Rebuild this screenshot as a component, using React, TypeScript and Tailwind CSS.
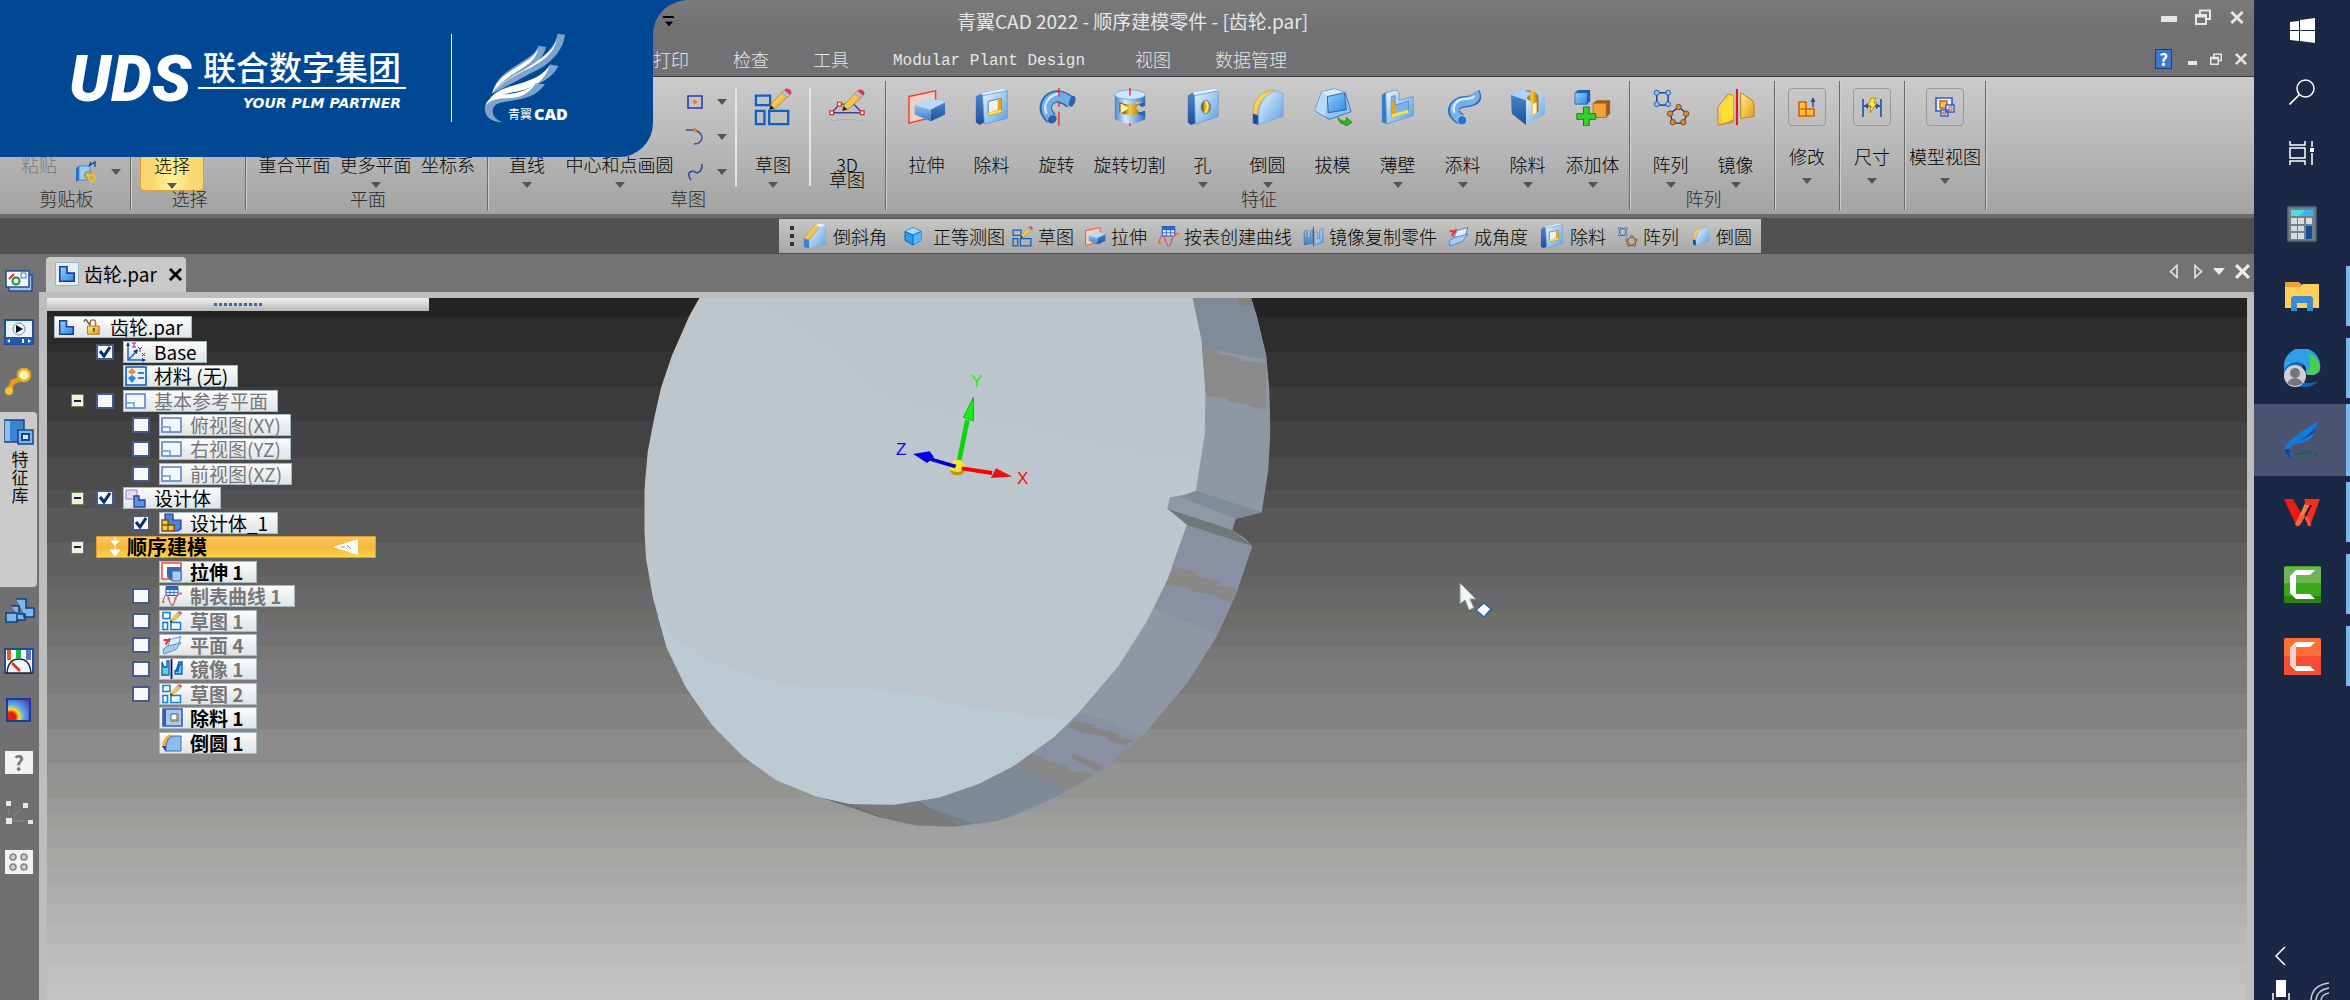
import React from 'react';

type IconProps = { className?: string };
type IconType = (p: IconProps) => React.ReactElement;

const Svg = ({ box = '0 0 40 40', className = '', children }: { box?: string; className?: string; children: React.ReactNode }) => (
  <svg viewBox={box} className={`shrink-0 ${className}`} fill="none" aria-hidden="true">
    {children}
  </svg>
);

/* Gradients shared by all icons */
const Gradients = () => (
  <svg className="absolute h-0 w-0" aria-hidden="true">
    <defs>
      <linearGradient id="blueLight" x1="0" y1="0" x2="1" y2="1">
        <stop offset="0" stopColor="#e8f5ff" />
        <stop offset="1" stopColor="#5a9fe0" />
      </linearGradient>
      <linearGradient id="blueMid" x1="0" y1="0" x2="0" y2="1">
        <stop offset="0" stopColor="#8cc2f0" />
        <stop offset="1" stopColor="#3c7cc4" />
      </linearGradient>
      <linearGradient id="blueDark" x1="0" y1="0" x2="0" y2="1">
        <stop offset="0" stopColor="#4a86cc" />
        <stop offset="1" stopColor="#1d4f98" />
      </linearGradient>
      <linearGradient id="gold" x1="0" y1="0" x2="1" y2="1">
        <stop offset="0" stopColor="#fff08a" />
        <stop offset="1" stopColor="#e59a12" />
      </linearGradient>
      <linearGradient id="goldDark" x1="0" y1="0" x2="1" y2="0">
        <stop offset="0" stopColor="#4a3208" />
        <stop offset="0.5" stopColor="#f6c93a" />
        <stop offset="1" stopColor="#a56a10" />
      </linearGradient>
      <linearGradient id="metal" x1="0" y1="0" x2="1" y2="0">
        <stop offset="0" stopColor="#4585cc" />
        <stop offset="0.35" stopColor="#d6ecfd" />
        <stop offset="1" stopColor="#3573bb" />
      </linearGradient>
      <linearGradient id="sky" x1="0" y1="0" x2="1" y2="1">
        <stop offset="0" stopColor="#8fd4ff" />
        <stop offset="1" stopColor="#2f86d8" />
      </linearGradient>
    </defs>
  </svg>
);

const Pencil = ({ t = '' }: { t?: string }) => (
  <g transform={t}>
    <path d="M16 23l2-6L31 3l6 5L23 21z" fill="url(#gold)" stroke="#a8741a" strokeWidth=".7" />
    <path d="M16 23l1.500-5 4 3.500z" fill="#222" />
    <path d="M29 5l3-3 6 5-3 3z" fill="#b9c0c8" stroke="#777" strokeWidth=".5" />
    <path d="M32 2q3-3 6 0t0 5z" fill="#e33355" />
  </g>
);

const Sketch: IconType = ({ className }) => (
  <Svg className={className}>
    <path d="M2 8h15v10H2zM2 24h9v14H2zM16 24h20v14H16z" stroke="#0c5fc8" strokeWidth="2.400" />
    <Pencil />
  </Svg>
);
const Sketch3D: IconType = ({ className }) => (
  <Svg className={className}>
    <path d="M3 35q17-4 33 0" stroke="#aaa" strokeWidth="1" />
    <path d="M4 26L12 17H27L36 26z" stroke="#3a3f9a" strokeWidth="1.500" />
    <path d="M2 24h4v4H2zM10 15h4v4h-4zM34 24h4v4h-4z" fill="#fff" stroke="#e8201c" strokeWidth="1.300" />
    <Pencil t="translate(-1 1)" />
  </Svg>
);
const Extrude: IconType = ({ className }) => (
  <Svg className={className}>
    <path d="M1 9L29 3V30L1 37z" fill="#f0cfc4" stroke="#ee3e2c" strokeWidth="1.500" />
    <path d="M7 18L21 10l18 5-15 8z" fill="#b8dcf8" />
    <path d="M7 18l17 5v12L7 28z" fill="url(#blueMid)" />
    <path d="M24 23l15-8v13l-15 7z" fill="url(#blueDark)" />
  </Svg>
);
const Cutout: IconType = ({ className }) => (
  <Svg className={className}>
    <path d="M3 9L8 6l4 2v28l-5 3-4-3z" fill="url(#blueDark)" />
    <path d="M8 6L31 1l5 2-24 5z" fill="#dceefc" />
    <path d="M10 8L36 3v29l-24 6z" fill="url(#blueLight)" stroke="#5f97d2" strokeWidth=".8" />
    <path d="M16 14l14-3v14l-14 4z" fill="#f2f2f0" stroke="#4076b8" />
    <path d="M16 26l10-3V12l4-1v15l-14 3z" fill="#e8a81a" />
    <path d="M16 29l14-4v-2l-14 3z" fill="#ffe84a" />
  </Svg>
);
const Revolve: IconType = ({ className }) => (
  <Svg className={className}>
    <path d="M14 32C2 20 11 8 22 9c6 1 9 3 13 7" stroke="#2e68b0" strokeWidth="13" />
    <path d="M14 32C3 20 11 9 22 9c6 1 9 3 13 7" stroke="#6fade8" strokeWidth="10" />
    <path d="M9 27C4 16 13 7 22 6" stroke="#d2e9fb" strokeWidth="2.500" />
    <ellipse cx="36" cy="14" rx="3" ry="6" transform="rotate(20 36 14)" fill="#2b62ab" />
    <ellipse cx="15" cy="33" rx="5" ry="4" transform="rotate(-40 15 33)" fill="#2b62ab" />
    <path d="M22 0v9m0 5v6m0 5v15" stroke="#ee1c1c" strokeWidth="1.300" />
  </Svg>
);
const RevolveCut: IconType = ({ className }) => (
  <Svg className={className}>
    <path d="M4 7v26q16 9 32 0v-7H26V15h10V7z" fill="url(#metal)" />
    <ellipse cx="20" cy="7" rx="16" ry="5" fill="#cbe6fb" stroke="#5e98d4" strokeWidth=".7" />
    <path d="M9 15q10 4 22 1l-5 5 5 6q-12 3-22-1z" fill="url(#goldDark)" />
    <path d="M10 16l9 5-9 6z" fill="#fff3a0" />
    <path d="M29 17l7-3v5l-4 1zM28 26l8-2v6l-6-2z" fill="#2a63ae" />
    <path d="M20 0v8m0 29v3" stroke="#ee1c1c" strokeWidth="1.400" />
  </Svg>
);
const Hole: IconType = ({ className }) => (
  <Svg className={className}>
    <path d="M4 8l5-3 3 3v29l-5 2-3-3z" fill="url(#blueDark)" />
    <path d="M9 5L32 1l4 2-24 5z" fill="#e2f2fd" />
    <path d="M11 8L36 3v27l-24 8z" fill="url(#blueLight)" stroke="#5f97d2" strokeWidth=".8" />
    <ellipse cx="23" cy="20" rx="5" ry="7" fill="url(#goldDark)" stroke="#5c8cc4" />
    <path d="M23 14q5 6-1 12" stroke="#fff0a0" strokeWidth="1.500" />
  </Svg>
);
const Round: IconType = ({ className }) => (
  <Svg className={className}>
    <path d="M4 27C4 12 14 3 25 2l3 2C16 8 10 14 9 28z" fill="url(#gold)" stroke="#c5901c" strokeWidth=".6" />
    <path d="M4 27l6 2v10l-6-2z" fill="#1e5099" />
    <path d="M10 39V28C11 15 18 6 28 3l8 3v24z" fill="url(#blueLight)" stroke="#6ea2d8" strokeWidth=".6" />
  </Svg>
);
const Chamfer: IconType = ({ className }) => (
  <Svg className={className}>
    <path d="M3 24L20 3l8 2L12 26z" fill="url(#gold)" stroke="#b8861c" strokeWidth=".7" />
    <path d="M3 24l8 3v12l-8-2z" fill="#3d80cc" />
    <path d="M11 39V27L28 5l8-2 1 30z" fill="url(#blueLight)" stroke="#6ea2d8" strokeWidth=".6" />
    <path d="M20 3l8-2 9 2-9 3z" fill="#e6f4ff" />
  </Svg>
);
const Draft: IconType = ({ className }) => (
  <Svg className={className}>
    <path d="M8 4L22 1l11 4 6 20-23 8L1 24z" fill="#8fc3f0" stroke="#2f66ab" strokeWidth=".9" />
    <path d="M8 4L22 1l11 4-19 4z" fill="#d5ecfd" />
    <path d="M8 4L1 24l11 6 2-21z" fill="#b9dbf7" />
    <path d="M14 9l18-4 2 18-19 3z" fill="url(#sky)" stroke="#2b63a8" strokeWidth="1" />
    <path d="M25 31q6 6 9 3v-3l6 5-7 5v-3q-6 1-8-7z" fill="#28b81c" stroke="#127010" strokeWidth=".7" />
  </Svg>
);
const Shell: IconType = ({ className }) => (
  <Svg className={className}>
    <path d="M3 7l5-3v34l-5-2z" fill="#3b7cc4" />
    <path d="M7 5l11-3 3 2v9l15-4v20L8 38z" fill="url(#blueLight)" stroke="#5a93d0" strokeWidth=".8" />
    <path d="M13 9l4-1v10l14-4v11l-18 6z" fill="#7fb2e4" stroke="#3c78bc" strokeWidth=".7" />
    <path d="M17 18v10l-4 3V9z" fill="#e8a51c" />
    <path d="M13 28l18-5v3l-18 5z" fill="#ffe23c" />
  </Svg>
);
const Sweep: IconType = ({ className }) => (
  <Svg className={className}>
    <path d="M32 5c5 9-6 9-13 10S4 25 18 33" stroke="#2d68b2" strokeWidth="12" />
    <path d="M32 5c4 8-6 9-13 10S5 25 18 33" stroke="#74b1ea" strokeWidth="9.500" />
    <path d="M31 8c1 4-8 3-13 4S8 20 11 26" stroke="#d9eefd" strokeWidth="2.500" />
    <ellipse cx="19" cy="34" rx="5" ry="5" fill="#2f72bf" stroke="#b5dbf8" />
  </Svg>
);
const SweepCut: IconType = ({ className }) => (
  <Svg className={className}>
    <path d="M2 7l16 6v26L3 27z" fill="url(#blueDark)" />
    <path d="M2 7L14 1l24 5-20 7z" fill="#a9d2f5" />
    <path d="M18 13l20-7v21L18 39z" fill="url(#blueLight)" />
    <path d="M17 3q9 2 4 5t3 7v14l7-4V9Q29 3 22 2z" fill="url(#goldDark)" />
    <path d="M25 17l4-2v11l-4 2z" fill="#fdf5d0" />
  </Svg>
);
const AddBody: IconType = ({ className }) => (
  <Svg className={className}>
    <path d="M1 5l3-3h13v12l-3 3H1z" fill="#1b60b4" />
    <path d="M1 5h13v12H1z" fill="url(#sky)" stroke="#1b5aa8" strokeWidth=".7" />
    <path d="M20 16l4-3h14v14l-4 4H20z" fill="#a4581a" />
    <path d="M20 16h14v15H20z" fill="#f2a33c" stroke="#a95f14" strokeWidth=".7" />
    <path d="M10 20h6v7h7v6h-7v7h-6v-7H3v-6h7z" fill="#35d02a" stroke="#137a12" strokeWidth="1" />
  </Svg>
);
const Pattern: IconType = ({ className }) => (
  <Svg className={className}>
    <path d="M5 5h12v13H5z" stroke="#23408f" strokeWidth="1.600" />
    <g fill="#8ec4f5" stroke="#1f58b0">
      <circle cx="5" cy="5" r="2.600" /><circle cx="17" cy="5" r="2.600" /><circle cx="5" cy="17" r="2.600" /><circle cx="17" cy="17" r="2.600" />
    </g>
    <path d="M28 20l9 7-4 10H22l-3-10z" stroke="#23308f" strokeWidth="1.500" />
    <g fill="#d98a3c" stroke="#7c4412">
      <circle cx="28" cy="20" r="2.800" /><circle cx="36" cy="27" r="2.800" /><circle cx="33" cy="36" r="2.800" /><circle cx="22" cy="36" r="2.800" /><circle cx="19" cy="27" r="2.800" />
    </g>
  </Svg>
);
const Mirror: IconType = ({ className }) => (
  <Svg className={className}>
    <path d="M1 20L12 6l5 2v28L1 39z" fill="url(#gold)" stroke="#b98410" />
    <path d="M5 21L14 9l3-1v25L5 37z" fill="#ffe032" />
    <path d="M25 5l12 8 2 4v13l-14 2z" fill="url(#gold)" stroke="#b98410" />
    <path d="M21 1v38" stroke="#ee1212" strokeWidth="2.200" />
  </Svg>
);
const Cube: IconType = ({ className }) => (
  <Svg className={className}>
    <path d="M4 11L20 3l16 8v18l-16 9L4 29z" fill="#2f9bea" stroke="#0f62b8" strokeWidth="2" />
    <path d="M4 11l16 7 16-7-16-8z" fill="#9edcff" />
    <path d="M20 18v20l16-9V11z" fill="#55b8f8" />
    <path d="M4 11l16 7 16-7M20 18v20" stroke="#0f62b8" strokeWidth="2" />
  </Svg>
);
const TableCurve: IconType = ({ className }) => (
  <Svg className={className}>
    <path d="M8 1h24v18H8z" fill="#dcecff" stroke="#2358b8" strokeWidth="2" />
    <path d="M8 2h24v6H8z" fill="#2767d0" />
    <path d="M8 13h24M16 8v11M24 8v11" stroke="#2358b8" strokeWidth="1.500" />
    <path d="M2 33C5 14 11 14 14 27s9 14 12 2S34 14 38 14" stroke="#b860a8" strokeWidth="2.500" />
    <path d="M0 32h5M11 26h5M18 38h5M35 15h5M24 25h5" stroke="#f07818" strokeWidth="4" />
  </Svg>
);
const MirrorPart: IconType = ({ className }) => (
  <Svg className={className}>
    <path d="M2 10l6-2v16l6-3V9l4-2v26L2 36z" fill="url(#blueMid)" stroke="#2a63ad" />
    <path d="M38 5l-6 2v16l-5 2V11l-4 1v24l15-5z" fill="url(#blueLight)" stroke="#2a63ad" />
    <path d="M20 1v38" stroke="#ee1c1c" strokeWidth="2" />
  </Svg>
);
const AnglePlane: IconType = ({ className }) => (
  <Svg className={className}>
    <path d="M2 29l12-9 24-5-10 14-24 9z" fill="#a5cdf2" stroke="#3a78c4" strokeWidth="1.500" />
    <path d="M12 22L16 9l22-6-5 14z" fill="#dcecfb" stroke="#3a78c4" strokeWidth="1.500" />
    <path d="M3 8h9l4-3v9l-3-1-4 8-3-3 3-6H3z" fill="#ee3030" />
  </Svg>
);

/* ---------- tree icons ---------- */
const PartIcon: IconType = ({ className }) => (
  <Svg box="0 0 20 20" className={className}>
    <path d="M2 2h8v7h8v9H2z" fill="url(#sky)" stroke="#1c3c9c" strokeWidth="1.800" />
  </Svg>
);
const LockIcon: IconType = ({ className }) => (
  <Svg box="0 0 20 20" className={className}>
    <path d="M1 4q2-4 4 0t3 2" stroke="#7a4a3a" strokeWidth="1.600" />
    <path d="M8 9V5a3 3 0 016 0v4" stroke="#9a6a3a" strokeWidth="1.500" />
    <path d="M5 9h13v9H5z" fill="url(#gold)" stroke="#a86c18" />
    <path d="M11 11h2v4h-2z" fill="#6b3e10" />
  </Svg>
);
const BaseIcon: IconType = ({ className }) => (
  <Svg box="0 0 20 20" className={className}>
    <path d="M2 1v17h17M2 18L11 9" stroke="#1e66c0" strokeWidth="1.500" />
    <path d="M0 4l2-4 2 4zM16 16l4 2-4 2zM7 9l5-2-1 5z" fill="#123c9c" />
    <path d="M6 1h4M8 1v4M6 5h4M12 5l2 2 2-2M14 7v3M16 11l3 3M19 11l-3 3" stroke="#8c1c9c" />
  </Svg>
);
const MaterialIcon: IconType = ({ className }) => (
  <Svg box="0 0 22 20" className={className}>
    <path d="M1 1h20v18H1z" fill="#e4f2ff" stroke="#0e56c0" strokeWidth="1.600" />
    <path d="M7 2l4 4-4 3-4-3z" fill="#f0902c" />
    <path d="M7 9l4 3-4 5-4-5z" fill="#2c88e0" />
    <path d="M13 7h6M13 12h6" stroke="#1c50a8" strokeWidth="1.600" />
  </Svg>
);
const PlaneIcon: IconType = ({ className }) => (
  <Svg box="0 0 22 20" className={className}>
    <path d="M1 3h19v14H1z" fill="#f2f8ff" stroke="#5c7cc4" strokeWidth="1.500" />
    <path d="M2 12h7v5" stroke="#5c9ce4" strokeWidth="1.400" />
  </Svg>
);
const BodyIcon: IconType = ({ className }) => (
  <Svg box="0 0 22 20" className={className}>
    <path d="M1 2h11v9H1z" fill="#e4dcf4" stroke="#8c84b8" />
    <path d="M9 8h5v4h6v7H9z" fill="#5c94e0" stroke="#2448a0" strokeWidth="1.400" />
  </Svg>
);
const Body1Icon: IconType = ({ className }) => (
  <Svg box="0 0 22 20" className={className}>
    <path d="M4 1h8v6h8v9l-3 2H9L4 8z" fill="#4a84d8" stroke="#1c3c90" strokeWidth="1.200" />
    <path d="M1 7h6v5h6v6H1zM1 12h6v6" fill="#f8cc3c" stroke="#7c4c0c" strokeWidth="1.300" />
  </Svg>
);
const ExtrudeNode: IconType = ({ className }) => (
  <Svg box="0 0 22 20" className={className}>
    <path d="M1 1h19v16H1z" fill="#fff" stroke="#ee4a40" strokeWidth="1.500" />
    <path d="M6 5h14v14h-9l-5-4z" fill="#3c68b8" />
    <path d="M11 9h9v10h-9z" fill="#a4ccf4" stroke="#3c68b8" />
  </Svg>
);
const SketchNode: IconType = ({ className }) => (
  <Svg box="0 0 40 40" className={className}>
    <path d="M2 3h14v12H2zM2 23h9v14H2zM18 23h19v14H18z" fill="#fff" stroke="#0c80d8" strokeWidth="3" />
    <Pencil />
  </Svg>
);
const MirrorNode: IconType = ({ className }) => (
  <Svg box="0 0 22 20" className={className}>
    <path d="M1 3l2 5h3V2h2v14H1zM21 3l-3 4-1 5h-2l3-9h3v12h-7v-4" fill="#5cd4dc" stroke="#1c58b0" strokeWidth="1.300" />
    <path d="M10.500 0v20" stroke="#0c1470" strokeWidth="1.800" />
  </Svg>
);
const CutNode: IconType = ({ className }) => (
  <Svg box="0 0 22 20" className={className}>
    <path d="M2 1h19v17H2z" fill="#a8c8f0" stroke="#3c5cb4" strokeWidth="1.600" />
    <path d="M2 1h3v17H2z" fill="#3c5cb4" />
    <path d="M10 6h7v7h-7z" fill="#fff" stroke="#3c5cb4" />
    <path d="M10 12h6V6" stroke="#c88c1c" strokeWidth="1.600" />
  </Svg>
);
const RoundNode: IconType = ({ className }) => (
  <Svg box="0 0 22 20" className={className}>
    <path d="M1 14Q2 3 10 1l1 3q-6 3-6 10z" fill="#f0b430" />
    <path d="M1 13h4v6z" fill="#1c3c90" />
    <path d="M5 18v-5q1-8 6-10h9v15z" fill="#8cbcec" stroke="#3c68b8" />
  </Svg>
);

/* ---------- ribbon ---------- */
const Caret = ({ className = '' }: IconProps) => (
  <svg viewBox="0 0 10 6" className={`h-[6px] w-[10px] shrink-0 ${className}`} aria-hidden="true">
    <path d="M0 0h10L5 6z" fill="#555557" />
  </svg>
);

function RibbonButton({ icon: I, label, caret, width = 'w-[65px]' }: { icon?: IconType; label: React.ReactNode; caret?: boolean; width?: string }) {
  return (
    <button className={`flex shrink-0 flex-col items-center pt-[11px] ${width}`}>
      <span className="block h-[38px]">{I && <I className="h-[38px] w-[38px]" />}</span>
      <span className="mt-7 whitespace-nowrap leading-5">{label}</span>
      {caret && <Caret className="mt-2" />}
    </button>
  );
}

function Group({ label, width, children, pad = '' }: { label: string; width: string; children: React.ReactNode; pad?: string }) {
  return (
    <section className={`flex shrink-0 flex-col py-1 ${width}`} aria-label={label}>
      <div className="flex flex-1 flex-col border-r border-[#6a6a6c] shadow-[1px_0_0_#cfcfcf]">
        <div className={`-mt-1 flex h-[111px] ${pad}`}>{children}</div>
        <div className="flex h-5 items-center justify-center pl-[3px] leading-5 text-[#2b2b2b]">{label}</div>
      </div>
    </section>
  );
}

function BoxedButton({ label, width, children }: { label: string; width: string; children: React.ReactNode }) {
  return (
    <section className={`flex shrink-0 py-1 ${width}`}>
      <button className="flex flex-1 flex-col items-center border-r border-[#6a6a6c] pt-[7px] shadow-[1px_0_0_#cfcfcf]">
        <span className="flex h-[38px] w-[38px] items-center justify-center rounded border border-[#989898]">{children}</span>
        <span className="mt-5 whitespace-nowrap leading-5">{label}</span>
        <Caret className="mt-3" />
      </button>
    </section>
  );
}

const features: { icon: IconType; label: string; caret?: boolean; width?: string }[] = [
  { icon: Extrude, label: '拉伸' },
  { icon: Cutout, label: '除料' },
  { icon: Revolve, label: '旋转' },
  { icon: RevolveCut, label: '旋转切割', width: 'w-[81px]' },
  { icon: Hole, label: '孔', caret: true },
  { icon: Round, label: '倒圆', caret: true },
  { icon: Draft, label: '拔模' },
  { icon: Shell, label: '薄壁', caret: true },
  { icon: Sweep, label: '添料', caret: true },
  { icon: SweepCut, label: '除料', caret: true },
  { icon: AddBody, label: '添加体', caret: true },
];

function Ribbon() {
  return (
    <div className="flex h-[138px] border-t border-[#3a3a3c] bg-linear-to-b from-[#cbcbcb] via-[#b8b8ba] to-[#a3a3a1] text-[18px] font-light text-black">
      <Group label="剪贴板" width="w-[131px]">
        <div className="flex w-full items-start pt-[77px]">
          <button className="ml-[21px] leading-5 text-[#7a7a7e]">粘贴</button>
          <button className="ml-[18px] mt-[7px] flex items-center gap-[14px]" aria-label="复制">
            <svg viewBox="0 0 22 22" className="h-[22px] w-[22px]" fill="none">
              <path d="M1 7l3-2v14l-3 2z" fill="#2b6cc4" />
              <path d="M4 5h11v14H4z" fill="#9ccbf4" stroke="#4a86cc" />
              <path d="M14 5l6-4v5M14 5l2-4" stroke="#1b4fa8" strokeWidth="1.500" />
              <circle cx="13" cy="14" r="3" stroke="#c89a10" strokeWidth="2" />
              <circle cx="17" cy="17" r="3" stroke="#e8c020" strokeWidth="2" />
            </svg>
            <Caret />
          </button>
        </div>
      </Group>
      <Group label="选择" width="w-[115px]">
        <div className="ml-[9px] flex h-[114px] rounded-b border border-[#d8a03c] bg-[radial-gradient(ellipse_at_bottom,#fff59a_0%,#fbd873_45%,#f8d168_100%)]">
          <RibbonButton label="选择" caret width="w-[62px]" />
        </div>
      </Group>
      <Group label="平面" width="w-[242px]" pad="pl-[8px]">
        <RibbonButton label="重合平面" width="w-[81px]" />
        <RibbonButton label="更多平面" caret width="w-[81px]" />
        <RibbonButton label="坐标系" width="w-[64px]" />
      </Group>
      <Group label="草图" width="w-[398px]" pad="pl-[8px]">
        <RibbonButton label="直线" caret width="w-[62px]" />
        <RibbonButton label="中心和点画圆" caret width="w-[123px]" />
        <div className="ml-[5px] flex flex-col gap-[17px] pt-[16px]">
          <button className="flex items-center gap-[13px]" aria-label="矩形">
            <Svg box="0 0 18 18" className="h-[18px] w-[18px]">
              <path d="M2 3h14v12H2z" stroke="#3038a8" strokeWidth="1.600" />
              <circle cx="9" cy="9" r="2" fill="#f07818" />
            </Svg>
            <Caret />
          </button>
          <button className="flex items-center gap-[13px]" aria-label="圆弧">
            <Svg box="0 0 18 18" className="h-[18px] w-[18px]">
              <path d="M0 2h8q8 2 8 8-1 6-8 6" stroke="#3c4aa0" strokeWidth="1.500" />
              <circle cx="9" cy="2" r="2" fill="#f07818" />
            </Svg>
            <Caret />
          </button>
          <button className="flex items-center gap-[13px]" aria-label="曲线">
            <Svg box="0 0 18 18" className="h-[18px] w-[18px]">
              <path d="M5 17Q1 11 4 9t7 1q5-1 5-9" stroke="#3c4a98" strokeWidth="1.600" />
            </Svg>
            <Caret />
          </button>
        </div>
        <div className="ml-2 mt-[11px] h-[98px] w-[2px] bg-[#e4e4ea]" />
        <RibbonButton icon={Sketch} label="草图" caret width="w-[72px]" />
        <div className="mt-[11px] h-[98px] w-[2px] bg-[#e4e4ea]" />
        <button className="flex w-[72px] flex-col items-center pt-[11px]">
          <Sketch3D className="h-[38px] w-[38px]" />
          <span className="mt-[31px] text-center leading-[15px]">3D<br />草图</span>
        </button>
      </Group>
      <Group label="特征" width="w-[744px]" pad="pl-[8px]">
        {features.map((f, i) => <RibbonButton key={i} {...f} />)}
      </Group>
      <Group label="阵列" width="w-[145px]" pad="pl-[8px]">
        <RibbonButton icon={Pattern} label="阵列" caret />
        <RibbonButton icon={Mirror} label="镜像" caret />
      </Group>
      <BoxedButton label="修改" width="w-[65px]">
        <Svg box="0 0 20 20" className="h-5 w-5">
          <path d="M2 5h7v7h8v7H2z" fill="#f8c830" stroke="#e0541c" strokeWidth="1.600" />
          <path d="M2 12h7v7" stroke="#e0541c" strokeWidth="1.600" />
          <path d="M16 10V3" stroke="#1c50a0" strokeWidth="1.500" /><path d="M13.500 5L16 0l2.500 5z" fill="#1c50a0" />
        </Svg>
      </BoxedButton>
      <BoxedButton label="尺寸" width="w-[65px]">
        <Svg box="0 0 20 20" className="h-5 w-5">
          <path d="M1 2v18M19 2v18M2 9h16" stroke="#1c50a0" strokeWidth="1.600" />
          <path d="M2 9l4-3v6zM18 9l-4-3v6z" fill="#1c50a0" />
          <path d="M9 1h5l-2 5h3L8 16l1-7H6z" fill="#ffe23c" stroke="#a87c10" strokeWidth=".8" />
        </Svg>
      </BoxedButton>
      <BoxedButton label="模型视图" width="w-[81px]">
        <Svg box="0 0 20 20" className="h-5 w-5">
          <path d="M1 1h16v13H1z" fill="#e8f0ff" stroke="#2c60c8" strokeWidth="1.600" />
          <path d="M5 4h7v7H5z" fill="#f8c830" stroke="#e0541c" strokeWidth="1.400" />
          <path d="M11 8h8v7h-8zM6 13h7v6H6z" fill="#e8f0ff" stroke="#2c60c8" strokeWidth="1.400" />
          <path d="M14 10h3v3h-3zM8 15h3v2H8z" stroke="#d8481c" />
        </Svg>
      </BoxedButton>
    </div>
  );
}

/* ---------- quick toolbar ---------- */
const quick: { icon: IconType; label: string; size: string; cell: string }[] = [
  { icon: Chamfer, label: '倒斜角', size: 'h-[26px] w-[26px]', cell: 'w-[26px]' },
  { icon: Cube, label: '正等测图', size: 'h-[20px] w-[20px]', cell: 'w-[22px] ml-1 mr-1' },
  { icon: Sketch, label: '草图', size: 'h-[21px] w-[21px]', cell: 'w-[21px] -ml-1' },
  { icon: Extrude, label: '拉伸', size: 'h-[21px] w-[21px]', cell: 'w-[21px]' },
  { icon: TableCurve, label: '按表创建曲线', size: 'h-[21px] w-[21px]', cell: 'w-[21px]' },
  { icon: MirrorPart, label: '镜像复制零件', size: 'h-[21px] w-[21px]', cell: 'w-[21px]' },
  { icon: AnglePlane, label: '成角度', size: 'h-[21px] w-[21px]', cell: 'w-[21px]' },
  { icon: Cutout, label: '除料', size: 'h-[26px] w-[26px]', cell: 'w-[26px]' },
  { icon: Pattern, label: '阵列', size: 'h-[21px] w-[21px]', cell: 'w-[21px]' },
  { icon: Round, label: '倒圆', size: 'h-[20px] w-[20px]', cell: 'w-[21px]' },
];

function QuickBar() {
  return (
    <div className="border-t-4 border-[#6b6b6d] bg-[#515153] pl-[779px]">
      <div className="flex h-[36px] items-center">
        <div className="flex h-[34px] w-[982px] items-center gap-[11px] bg-linear-to-b from-[#c6c6c4] to-[#a8a8a8] pl-[11px] text-[18px] font-light text-black">
          <span className="-mr-[3px] flex flex-col gap-1">
            <i className="h-1 w-1 bg-[#333]" /><i className="h-1 w-1 bg-[#333]" /><i className="h-1 w-1 bg-[#333]" />
          </span>
          {quick.map(({ icon: I, label, size, cell }) => (
            <button key={label} className="flex shrink-0 items-center gap-[5px] whitespace-nowrap">
              <span className={`flex justify-center ${cell}`}><I className={size} /></span>
              {label}
            </button>
          ))}
        </div>
      </div>
    </div>
  );
}

/* ---------- title and menus ---------- */
const Cross = ({ className = '' }: IconProps) => (
  <Svg box="0 0 14 14" className={className}><path d="M1 1l12 12M13 1L1 13" stroke="currentColor" strokeWidth="3" /></Svg>
);
const Restore = ({ className = '' }: IconProps) => (
  <Svg box="0 0 16 16" className={className}>
    <path d="M5 5V1.500h10V10h-4M1 6h10v9H1z" stroke="currentColor" strokeWidth="2" /><path d="M1 7.500h10" stroke="currentColor" strokeWidth="2" />
  </Svg>
);

const menus = ['打印', '检查', '工具', 'Modular Plant Design', '视图', '数据管理'];

function Header() {
  return (
    <header className="bg-linear-to-b from-[#7b7b7d] to-[#717173] to-[30px] text-[#e6e6e6]">
      <div className="flex h-[42px] items-center">
        <button className="ml-[663px] flex flex-col items-center gap-[3px]" aria-label="自定义快速访问">
          <i className="block h-[2px] w-[11px] bg-black" />
          <svg viewBox="0 0 10 6" className="h-[6px] w-[8px]"><path d="M0 0h10L5 6z" fill="#000" /></svg>
        </button>
        <h1 className="flex-1 pl-[283px] text-[19px] leading-6">青翼CAD 2022 - 顺序建模零件 - [齿轮.par]</h1>
        <div className="mb-[8px] flex items-center gap-[18px] pr-[9px]">
          <button aria-label="最小化" className="mt-1 h-[6px] w-4 bg-[#e6e6e6]" />
          <button aria-label="还原"><Restore className="h-4 w-4" /></button>
          <button aria-label="关闭"><Cross className="h-[13px] w-4" /></button>
        </div>
      </div>
      <nav className="flex h-[34px] items-center gap-11 pl-[653px] text-[18px] font-light">
        {menus.map((m) =>
          m.startsWith('M') ? (
            <button key={m} className="w-[198px] whitespace-nowrap pt-1 text-left font-['Liberation_Mono','Noto_Sans_CJK_SC',monospace] text-[16px] font-normal">{m}</button>
          ) : (
            <button key={m} className="whitespace-nowrap">{m}</button>
          ),
        )}
        <div className="ml-auto flex items-center gap-[13px] pr-[7px]">
          <button className="h-5 w-[17px] border border-[#16408c] bg-[#3a78cc] text-[17px] font-bold leading-[18px] text-white">?</button>
          <button aria-label="最小化文档" className="ml-[3px] mt-2 h-1 w-[9px] bg-[#e6e6e6]" />
          <button aria-label="还原文档"><Restore className="h-3 w-3" /></button>
          <button aria-label="关闭文档"><Cross className="h-3 w-3" /></button>
        </div>
      </nav>
    </header>
  );
}

function Banner() {
  return (
    <div className="absolute left-0 top-0 z-10 flex h-[157px] w-[653px] rounded-br-[34px] bg-[#004894] text-white">
      <svg viewBox="0 0 35 36" className="absolute left-full top-0 h-9 w-[35px]" aria-hidden="true"><path d="M0 0h35C14 1 0 16 0 36z" fill="#004894" /></svg>
      <div className="ml-[69px] mt-[35px] w-[129px] font-['Roboto',sans-serif] text-[65px] font-black italic leading-[88px]">UDS</div>
      <div className="mt-[45px] flex w-[208px] flex-col items-center">
        <div className="whitespace-nowrap text-[33px] font-medium leading-[42px]">联合数字集团</div>
        <div className="h-[2px] w-full bg-white" />
        <div className="mt-1 self-end whitespace-nowrap pr-[5px] font-['DejaVu_Sans',sans-serif] text-[14px] font-bold italic leading-[20px]">YOUR PLM PARTNER</div>
      </div>
      <div className="ml-[45px] mt-[34px] h-[88px] w-px bg-white" />
      <div className="relative ml-[32px] mt-[33px] h-[92px] w-[95px]">
        <svg viewBox="70 25 245 275" className="absolute left-0 top-0 h-[92px] w-[82px]" fill="none" aria-hidden="true">
          <path d="M290 27l22 3c-4 38-30 76-80 104C180 160 130 190 95 205c20-45 60-58 110-86 50-25 78-55 85-92z" fill="#7da3cc" />
          <path d="M288 40c-6 30-32 56-86 84-52 28-80 45-102 78 25-30 55-47 110-74 46-24 74-52 78-88z" fill="#fff" />
          <path d="M233 63l22 4c-4 25-22 42-60 65-45 25-80 45-100 70 14-45 40-60 80-86 34-20 50-32 58-53z" fill="#7da3cc" />
          <path d="M231 72c-8 21-28 34-60 53-38 24-66 42-77 82 22-35 50-51 88-75 32-20 46-36 49-60z" fill="#fff" />
          <path d="M268 119l24 5c-12 24-32 42-70 58-50 18-100 22-128 52l-16 12c8-38 34-50 88-62 52-14 82-32 102-65z" fill="#7da3cc" />
          <path d="M268 120c-20 30-48 44-98 58-48 14-78 24-90 60 20-24 50-32 90-38 54-10 82-36 98-80z" fill="#fff" />
          <path d="M225 175l27 3c-18 26-42 38-78 46-38 8-66 6-76 24-6 20 2 32 26 44-30-2-50-14-52-40 2-28 22-40 64-42 40-4 68-10 89-35z" fill="#7da3cc" />
          <path d="M225 176c-24 20-50 28-88 32-40 4-56 12-62 34 12-16 32-22 62-22 42 0 66-12 88-44z" fill="#fff" />
        </svg>
        <div className="absolute left-[24px] top-[73px] flex items-center gap-[2px] whitespace-nowrap leading-4">
          <span className="text-[12px]">青翼</span>
          <span className="font-['Open_Sans',sans-serif] text-[16px] font-extrabold">CAD</span>
        </div>
      </div>
    </div>
  );
}

/* ---------- document tab ---------- */
function DocTabs() {
  return (
    <div className="flex h-[38px] items-end bg-[#737375] pl-[46px]">
      <div className="flex h-[35px] w-[140px] items-center rounded-t bg-[#c9c9c9] pb-px pl-[9px] text-[19px] text-black">
        <span className="flex h-6 w-6 items-center justify-center border border-[#9cb4c4] bg-[#e6eef4]"><PartIcon className="h-[18px] w-[18px]" /></span>
        <span className="ml-[5px] leading-6">齿轮.par</span>
        <button className="ml-auto mr-1" aria-label="关闭标签"><Cross className="h-[13px] w-[13px]" /></button>
      </div>
      <div className="mb-[13px] ml-auto flex items-center gap-[10px] pr-[4px] text-[#ececec]">
        <button aria-label="上一个"><Svg box="0 0 9 15" className="mr-[6px] h-[15px] w-[9px]"><path d="M8 1.500v12L1.500 7.500z" stroke="currentColor" strokeWidth="1.500" /></Svg></button>
        <button aria-label="下一个"><Svg box="0 0 9 15" className="h-[15px] w-[9px]"><path d="M1 1.500v12l6.500-6z" stroke="currentColor" strokeWidth="1.500" /></Svg></button>
        <button aria-label="列表"><Svg box="0 0 12 7" className="h-[7px] w-3"><path d="M0 0h12L6 7z" fill="currentColor" /></Svg></button>
        <button aria-label="关闭"><Cross className="h-[15px] w-[15px]" /></button>
      </div>
    </div>
  );
}

/* ---------- side bar ---------- */
function SideBar() {
  return (
    <aside className="flex w-[39px] shrink-0 flex-col items-start bg-[#707072]">
      <button aria-label="图层" className="-mt-[22px] ml-[5px]">
        <Svg box="0 0 28 22" className="h-[22px] w-7">
          <path d="M4 5h23v16H4z" fill="#9cc4ec" stroke="#244c94" strokeWidth="1.500" /><path d="M1 1h23v16H1z" fill="#f2f8ff" stroke="#244c94" strokeWidth="1.500" />
          <path d="M4 9l5-5" stroke="#e03020" strokeWidth="2" /><circle cx="11" cy="11" r="3.500" stroke="#1c8c2c" strokeWidth="2" /><path d="M16 3h5v5h-5z" stroke="#3c74c4" />
        </Svg>
      </button>
      <button aria-label="播放" className="ml-1 mt-[27px]">
        <Svg box="0 0 30 26" className="h-[26px] w-[30px]">
          <path d="M1 1h28v24H1z" fill="#eaf2fa" stroke="#1c4c9c" strokeWidth="2" /><path d="M1 18h28v7H1z" fill="#2458ac" />
          <circle cx="15" cy="10" r="6" stroke="#889" /><path d="M12 6l7 4-7 4z" fill="#111" /><path d="M3 22l3-2v4zM27 22l-3-2v4zM18 20h2v4h-2z" fill="#fff" />
        </Svg>
      </button>
      <button aria-label="传感器" className="ml-1 mt-[22px]">
        <Svg box="0 0 28 28" className="h-7 w-7">
          <path d="M4 25L9 15l9-4" stroke="#e0a010" strokeWidth="5" /><circle cx="20" cy="8" r="6" fill="#fff3b0" stroke="#e8b020" strokeWidth="2.500" /><circle cx="5" cy="24" r="4" fill="#f2c23c" />
        </Svg>
      </button>
      <button className="mt-[17px] flex h-[175px] w-[37px] flex-col items-center rounded-r bg-[#cbcbcb] pt-[7px] text-[#111]">
        <Svg box="0 0 30 26" className="h-[26px] w-[30px]">
          <path d="M1 1h19v22H1z" fill="#3c84cc" stroke="#18468c" strokeWidth="1.500" /><path d="M1 2h5v20H1z" fill="#8cc0ec" />
          <path d="M14 11h15v14H14z" fill="#7cb4e8" stroke="#18468c" strokeWidth="1.500" /><path d="M18 15h7v6h-7z" fill="#d8ecfc" stroke="#18468c" strokeWidth="2" />
        </Svg>
        <span className="ml-[3px] mt-[5px] w-[18px] text-center text-[17px] leading-[18px]">特征库</span>
      </button>
      <button aria-label="族" className="ml-[5px] mt-[11px]">
        <Svg box="0 0 30 26" className="h-[26px] w-[30px]">
          <path d="M11 1h10v9h8v9h-10v-3M1 15h11v9H1zM6 8h8v8h6v6h-8v-6" fill="#78b8ec" stroke="#143c84" strokeWidth="1.500" />
        </Svg>
      </button>
      <button aria-label="仿真" className="ml-1 mt-[24px]">
        <Svg box="0 0 30 26" className="h-[26px] w-[30px]">
          <path d="M1 1h28v24H1z" fill="#fff" stroke="#1c4c9c" strokeWidth="2" /><path d="M3 2h4v10H3z" fill="#e06028" /><path d="M12 2h5v8h-5z" fill="#20b83c" /><path d="M22 2h5v10h-5z" fill="#5878c8" />
          <path d="M3 25Q4 11 15 11t12 14z" fill="#eef6ff" stroke="#223" strokeWidth="1.400" /><path d="M8 15l8 8" stroke="#e02c1c" strokeWidth="2.500" />
        </Svg>
      </button>
      <button aria-label="热力图" className="ml-[6px] mt-[24px] h-6 w-[25px] border-2 border-[#1c3c8c] bg-[radial-gradient(circle_at_15%_85%,#e81c10_18%,#f8e020_32%,#58a8f0_52%,#5838b0_95%)]" />
      <button className="ml-[5px] mt-[29px] h-[23px] w-[28px] bg-[#f2f2f2] text-[20px] font-bold leading-[23px] text-[#777]">?</button>
      <button aria-label="关系" className="ml-[5px] mt-[26px]">
        <Svg box="0 0 28 26" className="h-[26px] w-7"><path d="M1 1h5v5H1zM18 3h5v5h-5zM1 18h6v6H1zM23 20h5v4h-5z" fill="#e8e8e8" /><path d="M8 16l8-6M8 21h12M4 9v6" stroke="#8c8c8c" /></Svg>
      </button>
      <button aria-label="阵列" className="ml-[5px] mt-[24px]">
        <Svg box="0 0 28 24" className="h-6 w-7"><path d="M0 0h28v24H0z" fill="#f2f2f2" /><g stroke="#888" strokeWidth="1.600" fill="#ccc"><circle cx="8" cy="7" r="3" /><circle cx="19" cy="7" r="3" /><circle cx="8" cy="17" r="3" /><circle cx="19" cy="17" r="3" /></g></Svg>
      </button>
    </aside>
  );
}

/* ---------- feature tree ---------- */
type Node = { label: string; icon: IconType; depth: 1 | 2; open?: boolean; check?: boolean; dim?: boolean; bold?: boolean; active?: boolean };
const tree: Node[] = [
  { label: 'Base', icon: BaseIcon, depth: 1, check: true },
  { label: '材料 (无)', icon: MaterialIcon, depth: 1 },
  { label: '基本参考平面', icon: PlaneIcon, depth: 1, open: true, check: false, dim: true },
  { label: '俯视图(XY)', icon: PlaneIcon, depth: 2, check: false, dim: true },
  { label: '右视图(YZ)', icon: PlaneIcon, depth: 2, check: false, dim: true },
  { label: '前视图(XZ)', icon: PlaneIcon, depth: 2, check: false, dim: true },
  { label: '设计体', icon: BodyIcon, depth: 1, open: true, check: true },
  { label: '设计体_1', icon: Body1Icon, depth: 2, check: true },
  { label: '顺序建模', icon: BodyIcon, depth: 1, open: true, active: true },
  { label: '拉伸 1', icon: ExtrudeNode, depth: 2, bold: true },
  { label: '制表曲线 1', icon: TableCurve, depth: 2, check: false, dim: true, bold: true },
  { label: '草图 1', icon: SketchNode, depth: 2, check: false, dim: true, bold: true },
  { label: '平面 4', icon: AnglePlane, depth: 2, check: false, dim: true, bold: true },
  { label: '镜像 1', icon: MirrorNode, depth: 2, check: false, dim: true, bold: true },
  { label: '草图 2', icon: SketchNode, depth: 2, check: false, dim: true, bold: true },
  { label: '除料 1', icon: CutNode, depth: 2, bold: true },
  { label: '倒圆 1', icon: RoundNode, depth: 2, bold: true },
];

function TreeRow({ n }: { n: Node }) {
  const I = n.icon;
  return (
    <li className="flex items-center">
      <span className="w-[49px] shrink-0 pl-6">
        {n.open && (
          <button aria-label={`折叠 ${n.label}`} className="flex h-[13px] w-[13px] items-center justify-center border border-[#5c8c4c] bg-[#eef0e4]">
            <i className="h-[2px] w-[7px] bg-[#222]" />
          </button>
        )}
      </span>
      {n.active ? (
        <button className="flex h-[22px] w-[280px] items-center border border-[#e09a30] bg-linear-to-b from-[#f9c85c] via-[#f5b53c] to-[#fbd648] pr-4 text-[20px] font-bold leading-5 text-black">
          <Svg box="0 0 12 20" className="ml-3 h-5 w-3"><path d="M6 0v18M2 4l4 4 4-4zM1 13l5 6 5-6z" fill="#fff" stroke="#fff" /></Svg>
          <span className="ml-[6px]">{n.label}</span>
          <Svg box="0 0 26 16" className="ml-auto h-4 w-[26px]"><path d="M0 8L25 0v16z" fill="#fff" /><path d="M8 8h4M14 6l4 4" stroke="#888" /></Svg>
        </button>
      ) : (
        <>
          {n.depth === 2 && <span className="w-[36px]" />}
          <span className="relative flex h-4 w-[27px] shrink-0">
            {n.check !== undefined && (
              <>
                <input type="checkbox" defaultChecked={n.check} aria-label={n.label} className="peer h-4 w-[18px] appearance-none border-2 border-[#44598c] bg-[#f8f8fa]" />
                <svg viewBox="0 0 14 12" className="pointer-events-none absolute left-[2px] top-[2px] hidden h-3 w-[14px] peer-checked:block" fill="none"><path d="M2 5l4 5 6-9" stroke="#08306c" strokeWidth="3" /></svg>
              </>
            )}
          </span>
          <button className={`flex h-[22px] items-center whitespace-nowrap border border-[#a8b8c0] bg-linear-to-b from-[#fbfbfb] to-[#dfe5e8] pl-px text-[19px] leading-5 ${n.dim ? 'text-[#77777a]' : 'text-black'} ${n.bold ? 'pr-[12px] font-bold' : 'pr-[9px]'}`}>
            <I className="mr-[7px] h-5 w-[22px]" />
            {n.label}
          </button>
        </>
      )}
    </li>
  );
}

function FeatureTree() {
  return (
    <div className="relative w-[382px]">
      <div className="flex h-[13px] items-center justify-center bg-linear-to-b from-[#f0f0f0] to-[#b8b8b8]">
        <i className="h-[3px] w-12 bg-[repeating-linear-gradient(90deg,#3c68a8_0_3px,transparent_3px_5px)]" />
      </div>
      <ul className="mt-1 grid h-[440px] auto-rows-fr">
        <li className="flex items-center pl-[7px]">
          <button className="flex h-[22px] items-center border border-[#a8b8c0] bg-linear-to-b from-[#fbfbfb] to-[#dfe5e8] pl-[3px] pr-[8px] text-[19px] leading-5 text-black">
            <PartIcon className="h-[17px] w-[17px]" />
            <LockIcon className="ml-2 mr-[9px] h-5 w-[18px]" />
            齿轮.par
          </button>
        </li>
        {tree.map((n) => <TreeRow key={n.label} n={n} />)}
      </ul>
    </div>
  );
}

/* ---------- model view ---------- */
const Model = () => (
  <div className="absolute left-[573px] top-0 h-[542px] w-[680px]">
    <svg viewBox="0 50 1568 1518" preserveAspectRatio="none" className="h-full w-full" aria-label="齿轮模型" role="img">
      <defs>
        <clipPath id="rim">
          <path d="M1300 50H1455L1468 100 1490 210 1497 300 1500 420 1495 530 1480 650 1420 668 1412 700 1440 722 1458 745 1420 880 1375 1000 1310 1125 1210 1270 1110 1375 1030 1430 960 1478 870 1515 770 1531 680 1527 600 1505 540 1480 450 1445 900 1250 1250 700z" />
        </clipPath>
        <clipPath id="face">
          <path d="M183 50L160 100 120 210 95 300 80 380 64 480 56 590 56 700 60 780 76 890 108 1030 152 1140 212 1245 285 1335 360 1400 450 1445 530 1467 630 1469 735 1449 825 1412 905 1362 1000 1280 1055 1215 1150 1080 1215 955 1262 840 1307 685 1262 640 1268 608 1300 602 1328 590 1348 430 1350 320 1340 165 1320 50z" />
        </clipPath>
      </defs>
      <g clipPath="url(#rim)">
        <path d="M400 50h1150v1500H400z" fill="#8f96a4" />
        <path d="M1300 50h260v190l-220-52z" fill="#808b99" />
        <path d="M1425 50h32v22h-32z" fill="#838383" />
        <path d="M1340 188l40 10v8l50 12v6l60 8v130l-40-8v-6l-50-8v-8l-50-8-10-1z" fill="#8a8a8a" />
        <path d="M1307 685l151 60-80 245-145-70z" fill="#8a90a3" />
        <path d="M1280 805l50 12v10l50 16v10l50 14-15 40-50-26-50-10v-8l-60-10z" fill="#888888" />
        <path d="M1060 1212l60 20 80 45-150 220-160-140z" fill="#8a90a3" />
        <path d="M1045 1232l50 14v10l55 14v10l35 10-20 12-40-14v-8l-60-14-30-14zM1042 1326l70 34-8 16-60-36z" fill="#858585" />
        <path d="M950 1322l30 22 50 16v14l60 8-10 40-50 18-140-60z" fill="#888888" />
        <path d="M905 1360l130 70-200 110-160-80z" fill="#7f8a98" />
        <path d="M675 1460l140 62-60 30-120-90z" fill="#778088" />
        <path d="M450 1440l240 20 90 66-100 20z" fill="#7a7a7c" />
        <path d="M450 1440l80 24 80 45-20 10z" fill="#6a7274" />
      </g>
      <path d="M1328 590l152 60-60 18-130-62z" fill="#808b99" />
      <path d="M1268 608l147 60-3 32-150-60z" fill="#9097a5" />
      <path d="M1262 640l150 60 46 45-151-60z" fill="#6f7779" />
      <g clipPath="url(#face)">
        <path d="M0 50h1400v1450H0z" fill="#bdc5cd" />
        <path d="M290 50Q430 120 500 210T650 335T850 392T1040 438T1220 485L1400 515V50z" fill="#bac6cb" />
        <path d="M60 860Q90 1010 240 1080T500 1143T800 1195L1050 1235V1500H0V860z" fill="#bccad3" />
      </g>
      <path d="M782 505L801 392" stroke="#0ad60a" strokeWidth="11" />
      <path d="M792 384L815 328V394z" fill="#16f016" stroke="#0aa00a" strokeWidth="2" />
      <ellipse cx="778" cy="525" rx="18" ry="22" fill="#f4e53c" />
      <path d="M760 532q18 10 36 0-4 15-18 15t-18-15z" fill="#b09a18" />
      <path d="M774 522L712 500" stroke="#0000c8" strokeWidth="10" />
      <path d="M676 487l38-8 10 17-16 16z" fill="#0000e6" />
      <path d="M788 527l70 13" stroke="#f00" strokeWidth="11" />
      <path d="M855 554l12-27 37 23z" fill="#e81010" />
    </svg>
    <span className="absolute left-[351px] top-[74px] font-['Liberation_Sans',sans-serif] text-[17px] leading-5 text-[#1cf01c]">Y</span>
    <span className="absolute left-[397px] top-[171px] font-['Liberation_Sans',sans-serif] text-[17px] leading-5 text-[#f01010]">X</span>
    <span className="absolute left-[276px] top-[142px] font-['Liberation_Sans',sans-serif] text-[17px] leading-5 text-[#1010e0]">Z</span>
  </div>
);

const Pointer = () => (
  <svg viewBox="0 0 36 36" className="absolute left-[1411px] top-[283px] h-9 w-9" fill="none" aria-hidden="true">
    <path d="M2 2v21l5-4 4 10 5-2-4-9h6z" fill="#f0f6f6" stroke="#8a9292" />
    <path d="M26 22l7 6-7 8-8-7z" fill="#fff" stroke="#2c62b4" strokeWidth="1.600" />
  </svg>
);

/* ---------- taskbar ---------- */
const taskApps: { name: string; active?: boolean; running?: boolean; icon: React.ReactElement }[] = [
  {
    name: '计算器',
    icon: (
      <Svg box="0 0 30 36" className="h-9 w-[30px]">
        <path d="M1 1h28v34H1z" fill="#74808c" stroke="#5c6874" strokeWidth="1.500" /><path d="M4 4h22v6H4z" fill="#3cb4ec" /><path d="M4 4h14l-6 6H4z" fill="#4ce0d8" />
        <path d="M4 12h6v6H4zM11 12h6v6h-6zM19 12h6v6h-6zM4 20h6v5H4zM11 20h6v5h-6zM4 27h6v6H4zM11 27h6v6h-6z" fill="#d4dcdf" /><path d="M19 20h6v13h-6z" fill="#124a94" />
      </Svg>
    ),
  },
  {
    name: '资源管理器',
    running: true,
    icon: (
      <Svg box="0 0 34 30" className="h-[30px] w-[34px]">
        <path d="M0 1h14l3 3v7H0z" fill="#f09c34" /><path d="M0 6h15l3-3h16v24H0z" fill="#ffd058" />
        <path d="M6 30V17l2-2h18l2 2v13h-6v-8H12v8z" fill="#3c8cd4" />
      </Svg>
    ),
  },
  {
    name: 'Edge',
    running: true,
    icon: (
      <Svg box="0 0 38 38" className="h-[38px] w-[38px]">
        <path d="M1 19a18 18 0 0136-4c2 8-4 12-10 11-6 0-4-3-4-6 0-5-6-7-11-6C7 15 2 20 1 26z" fill="#2ca0e8" />
        <path d="M25 4c10 4 14 12 11 18-3 5-10 5-13 2 5-4 5-12 2-20z" fill="#4ccc50" />
        <path d="M1 22c4-9 14-11 20-6-4 2-6 8-4 13 2 6 12 6 18 3-6 9-26 8-31-2z" fill="#1464b4" />
        <circle cx="12" cy="27" r="11" fill="#d0d0d2" /><circle cx="12" cy="24" r="5" fill="#76767a" /><path d="M4 34q8-10 16 0-8 6-16 0z" fill="#76767a" />
      </Svg>
    ),
  },
  {
    name: '青翼CAD',
    active: true,
    running: true,
    icon: (
      <Svg box="0 0 38 40" className="h-10 w-[38px]">
        <path d="M34 1q2 8-6 13l3 0q-4 7-12 9-10 1-12 6-1 6 4 8-9 1-9-8c0-7 7-9 12-14S26 8 34 1z" fill="#1878d4" />
        <path d="M34 1q1 6-8 13T10 24q8-4 16-8T34 1zM2 29q0 8 8 9-5-3-3-9z" fill="#0c4498" />
        <path d="M13 34h4v-2M19 34l2-3v4M24 31v4M27 31v4M32 31v4h3" stroke="#1c6048" strokeWidth="1.500" />
      </Svg>
    ),
  },
  {
    name: 'WPS',
    running: true,
    icon: (
      <Svg box="0 0 38 30" className="h-[30px] w-[38px]">
        <path d="M1 2h9l8 14-5 12z" fill="#e81c14" /><path d="M12 28L24 2h6L19 22l-3 6z" fill="#ff7a3c" /><path d="M21 2h16L27 29l-4-9 6-12h-6z" fill="#ee2e20" /><path d="M13 28l3-1 5-9M23 20l4 9" stroke="#ff5a40" strokeWidth="3" />
      </Svg>
    ),
  },
  {
    name: 'Camtasia',
    running: true,
    icon: (
      <Svg box="0 0 37 37" className="h-[37px] w-[37px]">
        <rect width="37" height="37" rx="2" fill="#3ca818" /><path d="M0 1h37v16H0z" fill="#70b458" /><path d="M0 30h37v7H0z" fill="#2c8410" />
        <path d="M31 4l-5 5H12v19h14l5 5H12l-6-6V10l6-6z" fill="#fff" />
      </Svg>
    ),
  },
  {
    name: 'Camtasia 录像机',
    running: true,
    icon: (
      <Svg box="0 0 37 37" className="h-[37px] w-[37px]">
        <rect width="37" height="37" rx="2" fill="#ff7038" /><path d="M0 18h37v19H0z" fill="#f84c34" />
        <path d="M31 4l-5 5H12v19h14l5 5H12l-6-6V10l6-6z" fill="#fff" /><path d="M6 10l6-4v25l-6-4z" fill="#f0d4cc" />
      </Svg>
    ),
  },
];

function Taskbar() {
  return (
    <aside className="flex w-24 shrink-0 flex-col overflow-hidden bg-[#1a2845] text-white">
      <button aria-label="开始" className="flex h-[61px] shrink-0 items-center justify-center">
        <Svg box="0 0 25 25" className="h-[25px] w-[25px]"><path d="M0 4l9-1v9H0zM10 2l15-2v12H10zM0 13h9v10l-9-1zM10 13h15v12l-15-2z" fill="#fff" /></Svg>
      </button>
      <button aria-label="搜索" className="flex h-[61px] shrink-0 items-center justify-center">
        <Svg box="0 0 26 26" className="h-[26px] w-[26px]"><circle cx="16.500" cy="9.500" r="8.500" stroke="#fff" strokeWidth="1.500" /><path d="M10.500 15.500L.5 25.500" stroke="#fff" strokeWidth="1.700" /></Svg>
      </button>
      <button aria-label="任务视图" className="mb-[5px] flex h-[61px] shrink-0 items-center justify-center">
        <Svg box="0 0 26 24" className="h-6 w-[26px]"><path d="M1 0v4h15V0M1 24v-4h15v4M1 7h15v10H1zM23 0v6M23 12v12" stroke="#fff" strokeWidth="1.500" /><path d="M21 7h4v4h-4z" fill="#fff" /></Svg>
      </button>
      {taskApps.map((a) => (
        <button key={a.name} aria-label={a.name} className={`relative flex h-[72px] shrink-0 items-center justify-center ${a.active ? 'bg-[#4a536f]' : ''}`}>
          {a.icon}
          {a.running && <span className={`absolute right-0 w-1 bg-[#76b9ed] ${a.active ? 'inset-y-0' : 'inset-y-[6px]'}`} />}
        </button>
      ))}
      <div className="mt-auto pl-[18px]">
        <button aria-label="显示隐藏的图标" className="ml-[2px] block"><Svg box="0 0 12 20" className="h-5 w-3"><path d="M11 1L2 10l9 9" stroke="#fff" strokeWidth="1.500" /></Svg></button>
        <div className="mt-[13px] flex h-[21px] items-start gap-5">
          <Svg box="0 0 18 21" className="h-[21px] w-[18px]"><path d="M4 1h10v17H4z" fill="#fff" /><path d="M1 14v7M17 14v7" stroke="#fff" strokeWidth="1.500" /></Svg>
          <Svg box="0 0 20 21" className="h-[21px] w-5"><path d="M1 21Q2 6 19 4M6 21Q7 11 19 9M11 21q1-6 8-7" stroke="#c8ccd4" strokeWidth="1.500" /></Svg>
        </div>
      </div>
    </aside>
  );
}

export default function App() {
  return (
    <div className="relative flex h-screen overflow-hidden bg-[#707072] font-['Noto_Sans_CJK_SC','Noto_Sans',sans-serif]">
      <Gradients />
      <div className="flex min-w-0 flex-1 flex-col">
        <Header />
        <Ribbon />
        <QuickBar />
        <DocTabs />
        <div className="flex min-h-0 flex-1">
          <SideBar />
          <main className="relative min-w-0 flex-1 border-t-[6px] border-l-8 border-r-[7px] border-[#bdbdbd]">
            <div className="relative h-full overflow-hidden bg-[linear-gradient(180deg,#242424_0_19px,#2c2c2c_19px_54px,#343434_54px_89px,#3c3c3c_89px_123px,#434345_123px_160px,#4b4b4b_160px_192px,#515153_192px_210px,#585858_210px_245px,#606060_245px_279px,#656561_279px_290px,#69696b_290px_314px,#6e6e6a_314px_328px,#717173_328px_348px,#777773_348px_362px,#7b7b7d_362px_396px,#838383_396px_431px,#8b8b8b_431px_465px,#929294_465px_481px,#949490_481px_500px,#99999b_500px_515px,#9d9d99_515px_529px,#a1a1a3_529px_549px,#a5a5a1_549px_569px,#a9a9ab_569px_587px,#adadad_587px_607px,#b2b2b2_607px_627px,#b7b7b7_627px_647px,#bbbbbb_647px_667px,#bfbfbf_667px_687px,#c4c4c4_687px)]">
              <Model />
              <Pointer />
              <FeatureTree />
            </div>
          </main>
        </div>
      </div>
      <Taskbar />
      <Banner />
    </div>
  );
}
